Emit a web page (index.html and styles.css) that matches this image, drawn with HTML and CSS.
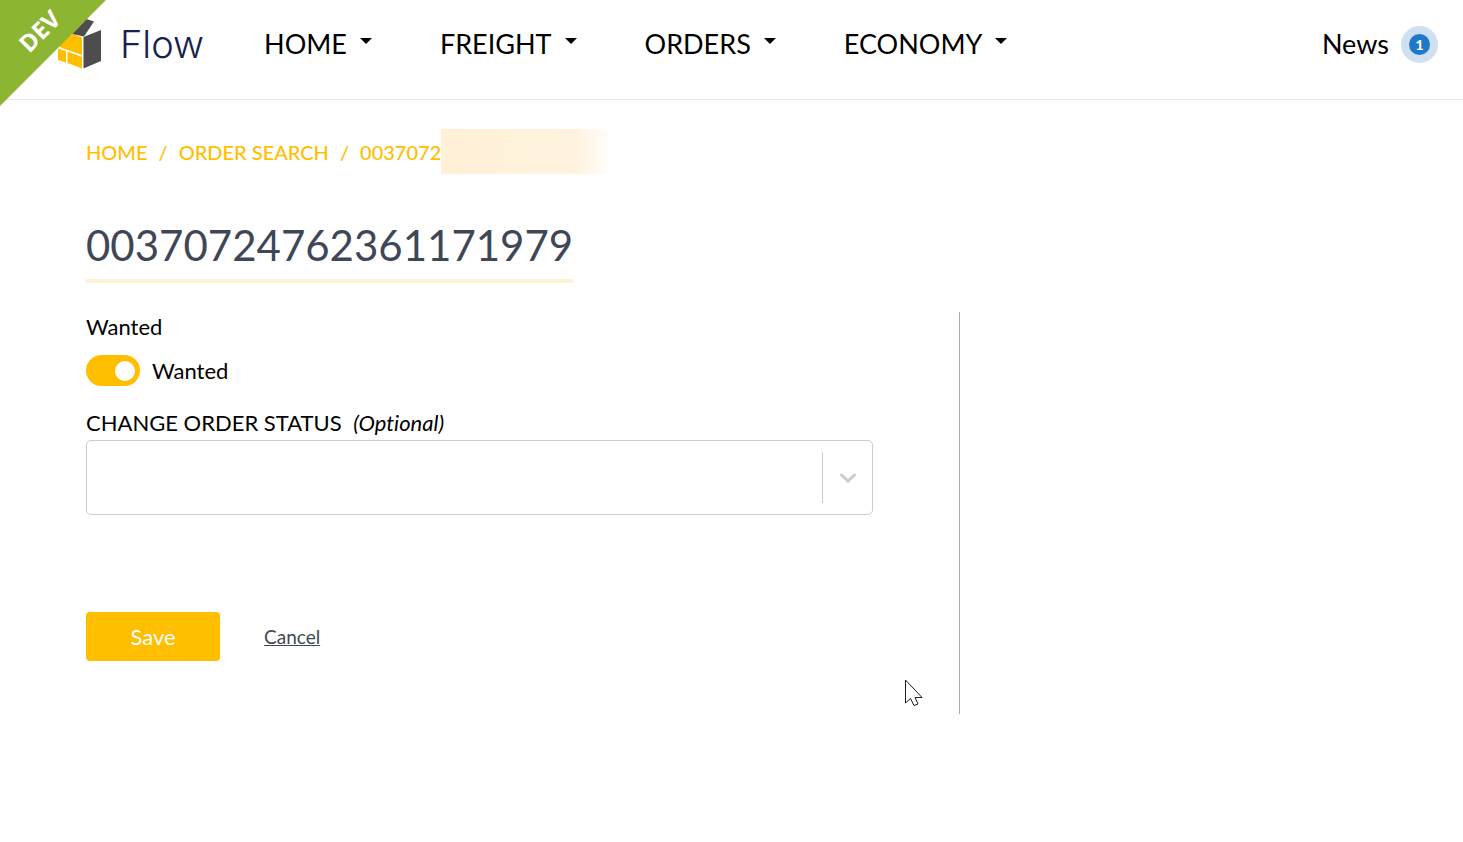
FILE: index.html
```html
<!DOCTYPE html>
<html lang="en">
    <head>
        <meta charset="utf-8">
        <title>Flow</title>
        <link rel="stylesheet" href="styles.css">
    </head>
    <body>
        <header class="header">
            <a class="logo" href="#">
                <svg class="logo-icon" width="44" height="50" viewBox="0 0 44 50" aria-hidden="true">
                    <path d="M14 15 L28.500 0 L36 2.500 L26 17.500 Z" fill="#4d4d4d"/>
                    <path d="M25.500 18 L43 11 V42 L25.500 49.500 Z" fill="#4d4d4d"/>
                    <path d="M0 19.500 L15 15 L24 18.500 V36 L0 27.500 Z" fill="#ffbe00"/>
                    <path d="M0 29.500 L8 32 V43.500 L0 41 Z" fill="#ffbe00"/>
                    <path d="M9.500 32.500 L24 38 V49.500 L9.500 44 Z" fill="#ffbe00"/>
                </svg>
                <span>Flow</span>
            </a>
            <nav class="nav">
                <a class="nav-link" href="#">HOME</a>
                <a class="nav-link" href="#">FREIGHT</a>
                <a class="nav-link" href="#">ORDERS</a>
                <a class="nav-link" href="#">ECONOMY</a>
            </nav>
            <a class="news" href="#">News <span class="badge">1</span></a>
        </header>
        <div class="ribbon"><span class="ribbon-text">DEV</span></div>

        <main class="page">
            <nav class="breadcrumb">
                <a href="#">HOME</a>
                <span>/</span>
                <a href="#">ORDER SEARCH</a>
                <span>/</span>
                <a class="current" href="#">00370724<span class="redacted"></span></a>
            </nav>
            <h1 class="title">00370724762361171979</h1>

            <div class="columns">
                <form class="order-form">
                    <div class="label">Wanted</div>
                    <div class="toggle-row">
                        <input class="toggle" type="checkbox" id="wanted" checked>
                        <label for="wanted">Wanted</label>
                    </div>
                    <label class="label" for="status">CHANGE ORDER STATUS <em>(Optional)</em></label>
                    <div class="select-wrap">
                        <select class="select" id="status">
                            <option></option>
                        </select>
                        <div class="indicator">
                            <svg width="16" height="10" viewBox="0 0 16 10" aria-hidden="true">
                                <path d="M1.500 2 L8 8 L14.500 2" fill="none" stroke="#ccc" stroke-width="3" stroke-linecap="round"/>
                            </svg>
                        </div>
                    </div>
                    <div class="actions">
                        <button class="save" type="submit">Save</button>
                        <a class="cancel" href="#">Cancel</a>
                    </div>
                </form>
            </div>
        </main>

        <svg class="cursor" width="20" height="28" viewBox="0 0 20 28" aria-hidden="true">
            <path d="M1.500 1 V24 L6.500 19.500 L10 26.500 L14 25 L11 18.500 H18 Z" fill="#fff" stroke="#1a1a24" stroke-width="1"/>
        </svg>
    </body>
</html>
```

FILE: styles.css
```css
* {
    box-sizing: border-box;
    margin: 0;
}

body {
    background-color: white;
    color: black;
    font-family: Lato, "Liberation Sans", sans-serif;
    font-size: 22px;
    font-variant-ligatures: none;
    line-height: 28px;
}

a {
    color: inherit;
    text-decoration: none;
}

.header {
    display: flex;
    align-items: center;
    height: 100px;
    padding: 0 25px 11px 58px;
    border-bottom: 1px solid #e9e9ef;
}

.logo {
    display: flex;
    align-items: center;
    gap: 18px;
    margin-right: 60px;
    color: #1a1f4d;
    font-family: Inter, sans-serif;
    font-size: 38px;
    font-weight: 300;
}

.nav {
    display: flex;
    flex: 1;
    gap: 68px;
    font-size: 27px;
}

.nav-link {
    display: flex;
    align-items: center;
    gap: 13px;
}

.nav-link::after {
    content: "";
    margin-bottom: 6px;
    border: 6px solid transparent;
    border-top-color: black;
    border-bottom: 0;
}

.news {
    display: flex;
    align-items: center;
    gap: 12px;
    font-size: 27px;
}

.badge {
    width: 37px;
    height: 37px;
    border: 8px solid #cfe1f1;
    border-radius: 50%;
    background-color: #2079c6;
    color: white;
    font-size: 14px;
    font-weight: 900;
    line-height: 21px;
    text-align: center;
}

.ribbon {
    position: absolute;
    top: 0;
    left: 0;
    display: flex;
    align-items: center;
    justify-content: center;
    width: 106px;
    height: 106px;
    padding: 0 28px 44px 0;
    background-color: #8cb531;
    clip-path: polygon(0 0, 100% 0, 0 100%);
}

.ribbon-text {
    color: white;
    font-family: "Open Sans", sans-serif;
    font-size: 24px;
    font-weight: 700;
    transform: rotate(-45deg);
}

.page {
    padding: 38px 0 0 86px;
}

.breadcrumb {
    display: flex;
    gap: 11px;
    color: #ffbe00;
    font-size: 20px;
    font-weight: 500;
}

.current {
    position: relative;
}

/* soft block that covers the end of the order number */
.redacted {
    position: absolute;
    top: -9px;
    left: 81px;
    width: 167px;
    height: 45px;
    background: linear-gradient(to right, #fff0d6, #fff3df 80%, #fffdf9);
}

.title {
    width: fit-content;
    margin-top: 49px;
    padding-bottom: 4px;
    border-bottom: 4px solid #fff3d6;
    color: #3f4756;
    font-size: 42px;
    font-weight: 400;
    line-height: 60px;
}

.columns {
    display: grid;
    grid-template-columns: 73fr 42fr;
    margin-top: 29px;
}

.order-form {
    padding: 1px 86px 53px 0;
    border-right: 1px solid #a5a9b5;
}

.label {
    display: block;
}

.label em {
    margin-left: 6px;
}

.toggle-row {
    display: flex;
    align-items: center;
    gap: 12px;
    margin: 14px 0 23px;
}

.toggle {
    display: flex;
    align-items: center;
    justify-content: flex-end;
    width: 54px;
    height: 31px;
    padding-right: 5px;
    border-radius: 16px;
    background-color: #ffbe00;
    appearance: none;
}

.toggle::after {
    content: "";
    width: 20px;
    height: 20px;
    border-radius: 50%;
    background-color: white;
}

.toggle:not(:checked) {
    justify-content: flex-start;
    padding-left: 5px;
    background-color: #ccc;
}

.select-wrap {
    position: relative;
    margin-top: 3px;
}

.select {
    display: block;
    width: 100%;
    height: 75px;
    padding: 0 62px 0 12px;
    border: 1px solid #ccc;
    border-radius: 5px;
    background-color: white;
    font: inherit;
    appearance: none;
}

.indicator {
    position: absolute;
    top: 12px;
    right: 1px;
    bottom: 12px;
    display: flex;
    align-items: center;
    justify-content: center;
    width: 50px;
    border-left: 1px solid #ccc;
    pointer-events: none;
}

.actions {
    display: flex;
    align-items: center;
    gap: 44px;
    margin-top: 97px;
}

.save {
    width: 134px;
    height: 49px;
    border: 0;
    border-radius: 4px;
    background-color: #ffbe00;
    color: white;
    font: inherit;
}

.cancel {
    color: #3f4756;
    font-size: 19px;
    text-decoration: underline;
}

.cursor {
    position: absolute;
    top: 679px;
    left: 904px;
}
```
